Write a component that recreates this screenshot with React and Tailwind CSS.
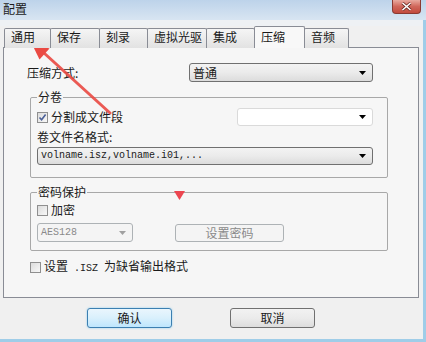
import React from "react";

const cjk = { fontFamily: '"Noto Sans CJK SC", "Noto Sans", sans-serif' };
const mono = { fontFamily: '"Liberation Mono", "DejaVu Sans Mono", monospace' };

function Arrow({ color = "#000" }) {
  return (
    <svg width="7" height="4" viewBox="0 0 7 4" className="shrink-0">
      <path d="M0 0 H7 L3.5 4 Z" fill={color} />
    </svg>
  );
}

function Combo({ width, text, white, disabled, mono: isMono }) {
  let box =
    "border-[#707070] bg-gradient-to-b from-[#f3f3f3] via-[#ebebeb] to-[#dcdcdc]";
  if (white) box = "border-[#dadada] bg-white";
  if (disabled) box = "border-[#adb2b5] bg-[#f4f4f4]";
  const size = isMono ? "text-[10px]" : "text-[12px]";
  const color = disabled ? "text-[#8a8a8a]" : "text-[#1a1a1a]";
  return (
    <div
      className={`flex items-center justify-between h-full border rounded-[3px] pl-[3px] pr-[6px] ${box}`}
      style={{ width }}
    >
      <span className={`leading-none ${size} ${color}`} style={isMono ? mono : cjk}>
        {text}
      </span>
      <Arrow color={disabled ? "#a0a0a0" : "#000"} />
    </div>
  );
}

function Check({ checked }) {
  return (
    <div className="w-[11px] h-[11px] border border-[#8f8f8f] bg-gradient-to-br from-[#dcdcdc] to-[#f8f8f8] flex items-center justify-center shrink-0">
      {checked && (
        <svg width="9" height="9" viewBox="0 0 9 9">
          <path d="M1.5 4.5 L3.6 6.8 L7.6 1.6" stroke="#4a5f97" strokeWidth="1.6" fill="none" />
        </svg>
      )}
    </div>
  );
}

const tabs = [
  { name: "通用", w: 47 },
  { name: "保存", w: 50 },
  { name: "刻录", w: 49 },
  { name: "虚拟光驱", w: 60 },
  { name: "集成", w: 49 },
  { name: "压缩", w: 51, active: true },
  { name: "音频", w: 45 },
];

export default function App() {
  return (
    <div
      className="relative w-[426px] h-[342px] overflow-hidden bg-[#f0f0f0] text-[12px] text-[#1a1a1a]"
      style={cjk}
    >
      {/* title bar */}
      <div className="h-[20px] flex items-start justify-between bg-gradient-to-b from-[#bdd3ea] to-[#d8e5f2]">
        <span className="pl-[3px] pt-[1px] text-[12px] leading-[16px] text-[#1b1b1b]">配置</span>
        <div className="mr-[5px] w-[29px] h-[14px] rounded-b-[4px] border border-t-0 border-[#8a3a32] bg-gradient-to-b from-[#e8a99f] via-[#d0665a] to-[#c24a3e] flex items-center justify-center">
          <svg width="11" height="9" viewBox="0 0 11 9">
            <path d="M1.5 1 L9.5 8 M9.5 1 L1.5 8" stroke="#6b2a23" strokeWidth="3" />
            <path d="M1.5 1 L9.5 8 M9.5 1 L1.5 8" stroke="#fff" strokeWidth="1.6" />
          </svg>
        </div>
      </div>

      <div className="bg-[#eef1f4] h-[6px]" />

      {/* tabs */}
      <div className="relative z-10 flex items-end h-[22px] pl-[4px]">
        {tabs.map((t) => (
          <div
            key={t.name}
            className={`-ml-px first:ml-0 border border-[#898c95] rounded-t-[2px] pl-[6px] leading-[16px] ${
              t.active
                ? "h-[22px] bg-[#f8f8f8] border-b-0 pt-[2px]"
                : "h-[20px] bg-gradient-to-b from-[#f5f5f5] to-[#e2e2e2] border-b-0"
            }`}
            style={{ width: t.w }}
          >
            {t.name}
          </div>
        ))}
      </div>

      {/* panel */}
      <div className="-mt-px mx-[3px] w-[416px] h-[251px] border border-[#898c95] bg-[#f6f6f6] flex flex-col">
        <div className="flex items-center h-[19px] mt-[15px] ml-[23px]">
          <span className="w-[162px] leading-[16px]">压缩方式:</span>
          <Combo width={184} text="普通" />
        </div>

        <fieldset className="ml-[26px] w-[358px] mt-[7px] border border-[#a8a8a8] rounded-[2px] pl-[6px] pb-[12px]">
          <legend className="px-[1px] leading-[16px]">分卷</legend>
          <div className="flex items-center h-[18px] mt-[3px]">
            <div className="flex items-center w-[200px] gap-[3px]">
              <Check checked />
              <span className="leading-[16px]">分割成文件段</span>
            </div>
            <Combo width={136} text="" white />
          </div>
          <div className="h-[16px] mt-[3px] leading-[16px]">卷文件名格式:</div>
          <div className="h-[18px] mt-[2px]">
            <Combo width={336} text="volname.isz,volname.i01,..." mono />
          </div>
        </fieldset>

        <fieldset className="ml-[26px] w-[358px] mt-[6px] border border-[#a8a8a8] rounded-[2px] pl-[6px] pb-[8px]">
          <legend className="px-[1px] leading-[16px]">密码保护</legend>
          <div className="flex items-center h-[16px] mt-[2px] gap-[3px]">
            <Check />
            <span className="leading-[16px]">加密</span>
          </div>
          <div className="flex items-center h-[19px] mt-[5px]">
            <div className="h-[19px]">
              <Combo width={96} text="AES128" disabled mono />
            </div>
            <div className="ml-[42px] w-[109px] h-[18px] border border-[#adb2b5] rounded-[3px] bg-[#f4f4f4] text-[#8a8a8a] flex items-center justify-center leading-none">
              设置密码
            </div>
          </div>
        </fieldset>

        <div className="flex items-center h-[16px] mt-[8px] ml-[26px] gap-[3px]">
          <Check />
          <span className="leading-[16px]">
            设置<span className="text-[10px]" style={mono}> .ISZ </span>为缺省输出格式
          </span>
        </div>
      </div>

      {/* buttons */}
      <div className="flex mt-[10px] h-[20px]">
        <div className="ml-[87px] w-[85px] h-[20px] rounded-[3px] border border-[#3c7fb1] bg-gradient-to-b from-[#eaf6fd] via-[#d9f0fc] to-[#bee6fd] shadow-[0_0_2px_#7fc8f0] flex items-center justify-center leading-none">
          确认
        </div>
        <div className="ml-[58px] w-[85px] h-[20px] rounded-[3px] border border-[#707070] bg-gradient-to-b from-[#f2f2f2] via-[#ebebeb] to-[#dddddd] flex items-center justify-center leading-none">
          取消
        </div>
      </div>

      {/* window frame edges */}
      <div className="absolute right-0 top-[20px] bottom-0 w-[3px] bg-[#9fcde8]" />
      <div className="absolute left-0 right-0 bottom-0 h-[3px] bg-[#9fcde8]" />

      {/* annotation overlay */}
      <svg className="absolute inset-0 pointer-events-none" width="426" height="342">
        <path d="M110 113 L44 53" stroke="#ea4a43" strokeWidth="3" strokeLinecap="round" opacity="0.9" />
        <path d="M31 42 L49.5 48.5 L39.5 59.5 Z" fill="#ea4a43" />
        <path d="M174 191 H185 L179.5 200 Z" fill="#ec4650" />
      </svg>
    </div>
  );
}
